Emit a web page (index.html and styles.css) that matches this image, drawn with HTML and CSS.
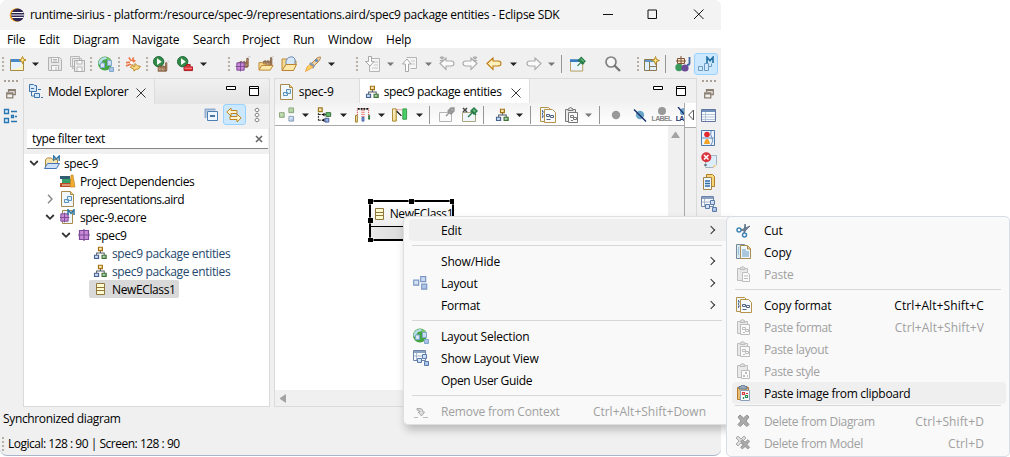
FILE: index.html
```html
<!DOCTYPE html>
<html lang="en">
<head>
<meta charset="utf-8">
<title>runtime-sirius - Eclipse SDK</title>
<link rel="stylesheet" href="styles.css">
</head>
<body>
<svg class="sprite" width="0" height="0">
<defs>
<linearGradient id="gY" x1="0" y1="0" x2="1" y2="1"><stop offset="0" stop-color="#fffce8"/><stop offset="1" stop-color="#f0cf72"/></linearGradient>
<linearGradient id="gG" x1="0" y1="0" x2="1" y2="1"><stop offset="0" stop-color="#e0f2dc"/><stop offset="1" stop-color="#57a05c"/></linearGradient>
<linearGradient id="gB" x1="0" y1="0" x2="1" y2="1"><stop offset="0" stop-color="#f2f7ff"/><stop offset="1" stop-color="#9fb8e4"/></linearGradient>
<linearGradient id="gS" x1="0" y1="0" x2="1" y2="1"><stop offset="0" stop-color="#e3efcb"/><stop offset="1" stop-color="#8fbf8d"/></linearGradient>
</defs>
<symbol id="dots-v" viewBox="0 0 3 16"><path d="M0 1h2v2H0zM0 5h2v2H0zM0 9h2v2H0zM0 13h2v2H0z" fill="#b8afa6"/></symbol>
<symbol id="dots-h" viewBox="0 0 16 3"><path d="M1 0h2v2H1zM5 0h2v2H5zM9 0h2v2H9zM13 0h2v2h-2z" fill="#aaa096"/></symbol>
<symbol id="arrow" viewBox="0 0 9 16"><path d="M1 6.500h7L4.500 10z"/></symbol>
<symbol id="eclipse" viewBox="0 0 16 16"><circle cx="7.500" cy="8" r="6.800" fill="#f6a51d"/><circle cx="8.700" cy="8" r="6.500" fill="#2e2753"/><path d="M3 5.500h11.500M2.300 8h13M3 10.500h11.500" stroke="#fff" stroke-width="1.200"/></symbol>
<symbol id="new" viewBox="0 0 16 16"><path d="M.5 3.500h13v11H.5z" fill="#e6f1fc" stroke="#a78a42"/><path d="M1 3h10v3H1z" fill="#4b89c6"/><path d="M3 13q8 0 10-7v8H3z" fill="#fff5c9"/><path d="M12.500.5l1 2.500 2.500 1-2.500 1-1 2.500-1-2.500L9 4l2.500-1z" fill="#ffe680" stroke="#b58a26"/></symbol>
<symbol id="save" viewBox="0 0 16 16"><path d="M1.500 1.500h11l2 2v11h-13z" fill="#e8e8e8" stroke="#b2b2b2"/><path d="M4.500 1.500h7v5h-7zM4.500 9.500h7v5h-7z" fill="#f6f6f6" stroke="#b2b2b2"/><path d="M6 3.500h4M6 5h4M9 11v3" stroke="#b5b5b5"/></symbol>
<symbol id="saveall" viewBox="0 0 16 16"><path d="M.5.5h9v10h-9zM2.500 2.500h9v10h-9z" fill="#ececec" stroke="#b8b8b8"/><path d="M4.500 4.500h10v11h-10z" fill="#ececec" stroke="#adadad"/><path d="M7 5v3h5V5M7 15v-4h5v4" fill="#fafafa" stroke="#b8b8b8"/></symbol>
<symbol id="globe" viewBox="0 0 16 16"><circle cx="7" cy="7.500" r="7" fill="#45a544"/><path d="M1 5q2-4 7-4l1 2-4 1-2 3-2 2Q0 7 1 5z" fill="#b9dcef"/><path d="M9 1q5 2 5 6l-4 2z" fill="#7ec671"/><path d="M2.500 7h4v4.500h-4zM9.500 4.500h4v5h-4zM11.500 11.500h4v4h-4z" fill="url(#gB)" stroke="#7fa8cc"/></symbol>
<symbol id="validate" viewBox="0 0 17 16"><path d="M1 6.500l6-.5M4 1l3.500 4.500M9 1l-1 4M1 10l6-2M11 4l-4 3" stroke="#ee7749" stroke-width="1.800" fill="none"/><circle cx="7" cy="6.500" r="1.700" fill="#fff"/><path d="M5.500 11.500l3-3v2h2v-3l3 2.500 3 .5-2.500 3h-2l-2.500 2v-2z" fill="#f9dc86" stroke="#bd8420"/></symbol>
<symbol id="factory" viewBox="0 0 16 16"><path d="M0 15V9l4-2v2l4-2v2l4-2v8z" fill="#a37c59" stroke="#765334"/><path d="M11 14V3h2v11z" fill="#b88c6b" stroke="#765334"/><path d="M2 12h2M6 12h2M10 12h1" stroke="#eee"/><path d="M13 1q2-2 3 1" fill="none" stroke="#b8b8b8"/></symbol>
<symbol id="play" viewBox="0 0 16 16"><circle cx="6" cy="6" r="5.500" fill="#318a47" stroke="#176634"/><path d="M4.300 2.500v7l5-3.500z" fill="#fff"/></symbol>
<symbol id="runfac" viewBox="0 0 17 17"><use href="#play" width="16" height="16"/><use href="#factory" x="5" y="5" width="12" height="12"/></symbol>
<symbol id="runext" viewBox="0 0 17 17"><use href="#play" width="16" height="16"/><path d="M7.500 11.500h9v4h-9zM10 11V9h4v2" fill="#e92b2b" stroke="#a41c23"/><path d="M8 13h8" stroke="#ff999d"/></symbol>
<symbol id="pkg" viewBox="0 0 16 16"><path d="M3.500 3.500h9v9h-9z" fill="#c98bd6"/><path d="M3.500 3.500h9v9h-9zM8 2v12M2 8h12" fill="none" stroke="#7f4a99" stroke-width="1.200"/></symbol>
<symbol id="facpkg" viewBox="0 0 16 16"><use href="#factory" x="3" y="0" width="13" height="12"/><use href="#pkg" x="-1" y="4" width="13" height="13"/></symbol>
<symbol id="folder" viewBox="0 0 16 16"><path d="M1.500 14V4.500l1-1.500h4l1 1.500h6V8" fill="#f7d98c" stroke="#bc8936"/><path d="M1.500 14.500l3-6.500h11l-2.500 6.500z" fill="#fce8a9" stroke="#ba8130"/></symbol>
<symbol id="facfolder" viewBox="0 0 17 16"><use href="#factory" x="5" y="-1" width="12" height="12"/><path d="M1 14V6.500h4l1 1.500h3" fill="#f7d98c" stroke="#bc8936"/><path d="M1 14.500l3-5h12l-3 5z" fill="#fce8a9" stroke="#ba8130"/></symbol>
<symbol id="openfolder" viewBox="0 0 16 16"><path d="M1 14V3h6l1 2h7v3" fill="#f7d98c" stroke="#bc8936"/><path d="M5 9V5q2-5 7-4l2 2v7" fill="#d7e7fa" stroke="#6f8bb3"/><path d="M1 14.500l4-6h10.500l-3 6z" fill="#fce8a9" stroke="#ba8130"/></symbol>
<symbol id="rocket" viewBox="0 0 16 16"><path d="M5 9l7-7q3-1.500 3.500-1 .5 1-1.500 4l-6 6z" fill="#ecd0a1" stroke="#b58750"/><path d="M4 8l2-2 4 4-2 3z" fill="#8898a8"/><path d="M4.500 9L2 11l-1.500 4.500L5 13l3-2z" fill="#ffcf57" stroke="#f1a94e"/><circle cx="11.500" cy="4.500" r="1.500" fill="#5987bf"/></symbol>
<symbol id="docdown" viewBox="0 0 16 16"><path d="M6.500 2.500h8v13h-10V10" fill="#f5f5f5" stroke="#b5b5b5"/><path d="M9 6h4M9 9h4M7 12h6" stroke="#c8c8c8"/><path d="M3.500.5h3v5h2.500L5 10 .5 5.500h3z" fill="#fff" stroke="#a7a7a7"/></symbol>
<symbol id="docup" viewBox="0 0 16 16"><path d="M4.500 1.500h10v11h-6" fill="#f5f5f5" stroke="#b5b5b5"/><path d="M9 5h4M9 8h4" stroke="#c8c8c8"/><path d="M3.500 15.500h3V8H9L5 3 .5 8h3z" fill="#fff" stroke="#a7a7a7"/></symbol>
<symbol id="back" viewBox="0 0 16 16"><path d="M1 7.500L7 2v3h5q3 0 3 2.500T12 10H7v3.500z"/></symbol>
<symbol id="forward" viewBox="0 0 16 16"><path d="M15 7.500L9 2v3H4q-3 0-3 2.500T4 10h5v3.500z"/></symbol>
<symbol id="pinwin" viewBox="0 0 17 16"><path d="M.5 4.500h13v11H.5z" fill="#edf5fe" stroke="#b29859"/><path d="M0 3h14v3H0z" fill="#397dbf"/><path d="M8 10l3-3M10 3l5 5M12 1l4 4-3 3-4-4z" fill="#65b877" stroke="#267b48" stroke-width="1.300"/></symbol>
<symbol id="search" viewBox="0 0 16 16"><circle cx="6" cy="6" r="5" fill="#f7f7f7" stroke="#808080" stroke-width="1.700"/><path d="M9.500 9.500L15 15" stroke="#747474" stroke-width="2.200"/></symbol>
<symbol id="persp" viewBox="0 0 16 16"><path d="M.5 3.500h12v11H.5z" fill="#e1f0fd" stroke="#8c764c"/><path d="M1 4h11v2H1z" fill="#6295c7"/><path d="M5.500 6v8M5.500 10.500h7" stroke="#8c764c"/><path d="M11.500.5l1 3 3 1-3 1-1 3-1-3-3-1 3-1z" fill="#ffe680" stroke="#b58a26"/></symbol>
<symbol id="java" viewBox="0 0 16 16"><path d="M2.500 2.500h7v5h-7zM6 0v9M1 5h10" fill="#f7e7cb" stroke="#805336"/><circle cx="4" cy="11.500" r="3.700" fill="#3c9a5c"/><circle cx="10" cy="12" r="3.600" fill="#6c4b98"/><path d="M14.500 1v6q0 2-2.500 2" stroke="#4068a6" stroke-width="1.800" fill="none"/></symbol>
<symbol id="modeling" viewBox="0 0 16 16"><path d="M.5 10.500h4v4h-4zM6.500 7.500h4v7h-4zM10.500 10.500h3v-3" fill="#d1e7fb" stroke="#6c9cc4"/><path d="M9 7V1.200l3 3.500 3-3.500V7" fill="none" stroke="#2875a9" stroke-width="1.700"/></symbol>
<symbol id="explorer" viewBox="0 0 16 16"><path d="M1.500.5h4l1 1h2v6h-7zM6.500 9.500h5v4h-5z" fill="#d8e9fb" stroke="#3c75ad"/><path d="M3 4.500h3M3.500 8v4H6M10 5.500h3M13 13.500h2" stroke="#3c75ad" fill="none"/></symbol>
<symbol id="outline" viewBox="0 0 16 16"><path d="M1.500 1.500h4v4h-4zM1.500 10.500h4v4h-4zM8.500 7.500h2v2h-2z" fill="#d7ecfa" stroke="#2776b2" stroke-width="1.300"/><path d="M8 3.500h6M12 8.500h2M8 13.500h6" stroke="#2776b2" stroke-width="1.300"/></symbol>
<symbol id="restore" viewBox="0 0 10 10"><path d="M2.500 3V.7h6.800v4.800H7M.7 4h6.100v4.800H.7zM.7 4.800h6M2.500 1.500h6.500" fill="none" stroke="#8c8073" stroke-width="1.300"/></symbol>
<symbol id="collapse" viewBox="0 0 16 16"><path d="M1.500 11V2.500h10" fill="none" stroke="#92afd1" stroke-width="2"/><path d="M3.500 4.500h10v9h-10z" fill="#eef7ff" stroke="#4d80b5"/><path d="M6 9h5" stroke="#174c80" stroke-width="1.400"/></symbol>
<symbol id="link" viewBox="0 0 16 16"><path d="M.8 5L5 1v2.500h6v3H5V9zM15.200 11L11 7v2.500H4v3h7V15z" fill="#fff4cf" stroke="#bd8320"/></symbol>
<symbol id="kebab" viewBox="0 0 6 16"><path d="M1 2.500L3 1l2 1.500v1L3 5 1 3.500zM1 7.500L3 6l2 1.500v1L3 10 1 8.500zM1 12.500L3 11l2 1.500v1L3 15l-2-1.500z" fill="#fff" stroke="#707070" stroke-width=".9"/></symbol>
<symbol id="minimize" viewBox="0 0 10 5"><path d="M.5.5h9v3h-9z" fill="#fff" stroke="#000"/></symbol>
<symbol id="maximize" viewBox="0 0 10 10"><path d="M.5.5h9v9h-9zM.5 2.500h9" fill="#fff" stroke="#000"/></symbol>
<symbol id="x" viewBox="0 0 10 10"><path d="M.5.5l9 9M9.500.5l-9 9" stroke="#222" stroke-width=".9"/></symbol>
<symbol id="clear" viewBox="0 0 8 8"><path d="M1 1l6 6M7 1L1 7" stroke="#666" stroke-width="1.600"/></symbol>
<symbol id="open" viewBox="0 0 10 10"><path d="M1.200 3L5 6.800 8.800 3" fill="none" stroke="#333" stroke-width="1.800"/></symbol>
<symbol id="closed" viewBox="0 0 10 10"><path d="M3 .8L7 5 3 9.200" fill="none" stroke="#888" stroke-width="1.400"/></symbol>
<symbol id="project" viewBox="0 0 16 16"><path d="M1.500 13V4.500l2-1.500h4l1 1.500h5V9" fill="#f8e5ae" stroke="#ae8747"/><path d="M.5 13.500l3-5h12l-3 5z" fill="#cce0fa" stroke="#4675b7"/><path d="M9.700 6V1l2.600 3L15.200 1v5" fill="none" stroke="#3479a7" stroke-width="1.500"/></symbol>
<symbol id="books" viewBox="0 0 16 16"><path d="M0 3h10v3H0z" fill="#305d70"/><path d="M2 6h9v4H2z" fill="#35a06b"/><path d="M0 10h11v4H0z" fill="#b74b25"/><path d="M2 12h10" stroke="#ffe5c3"/><path d="M10 14l1-12h2l2 12z" fill="#f2ad30" stroke="#b87b21" stroke-width=".6"/></symbol>
<symbol id="aird" viewBox="0 0 16 16"><path d="M1.500.5h9l3 3v12h-12z" fill="#f0f7fd" stroke="#a98a4d"/><path d="M10.500.5v3h3" fill="#f1ca71" stroke="#a98a4d"/><path d="M4.500 8.500h4v3h-4zM7.500 5.500h4v4h-4z" fill="#dff0fd" stroke="#5b91bd"/></symbol>
<symbol id="ecore" viewBox="0 0 16 16"><path d="M2.500 1.500h10v13h-10z" fill="#eef5fb" stroke="#a98a4d"/><use href="#pkg" x="-2" y="2" width="13" height="13"/><path d="M8 6V.8l3 3.500 3-3.500V6" fill="none" stroke="#3479a7" stroke-width="1.600"/></symbol>
<symbol id="diagram" viewBox="-2 -1.500 19 19"><path d="M8 5v3M3.500 11V8h9v3" fill="none" stroke="#4f5a62" stroke-width="1.200"/><path d="M5.700 1.200h4.600v4H5.700z" fill="url(#gY)" stroke="#a46f12" stroke-width="1.400"/><path d="M1 10.700h4.800v3.800H1z" fill="url(#gB)" stroke="#48638f" stroke-width="1.400"/><path d="M10 10.700h4.800v3.800H10z" fill="url(#gG)" stroke="#417037" stroke-width="1.400"/></symbol>
<symbol id="class" viewBox="0 0 16 16"><path d="M4.500 2.500h8v11h-8zM4.500 6.500h8M4.500 9.500h8" fill="#fffbd0" stroke="#8f763d"/></symbol>
<symbol id="arrange" viewBox="0 0 17 16"><path d="M.5 5.500h5v5h-5zM10.500.5h5v5h-5z" fill="url(#gS)" stroke="#88a379"/><path d="M10.500 9.500h5v5h-5z" fill="url(#gB)" stroke="#879fb8"/></symbol>
<symbol id="align" viewBox="0 0 17 16"><path d="M1.500.5h4v4h-4z" fill="url(#gY)" stroke="#9b7a22" stroke-width="1.300"/><path d="M1.500 6v9M2 7.500h8M2 13.500h6" fill="none" stroke="#111" stroke-dasharray="2 1"/><path d="M5 7.500l3-2v4zM5 13.500l3-2v4z" fill="#111"/><path d="M9.500 5.500h5v4h-5z" fill="#65b96d" stroke="#356d39"/><path d="M8.500 11.500h4v4h-4z" fill="#95b4e5" stroke="#3d5591"/></symbol>
<symbol id="distribute" viewBox="0 0 17 16"><path d="M.5 8.500h2v7h-2z" fill="url(#gY)" stroke="#9b7a22"/><path d="M7.500 10.500h2v4h-2z" fill="#7fa0db" stroke="#4061a5"/><path d="M14.500 8.500h1v4h-1z" fill="#65b96d" stroke="#356d39"/><path d="M2.500 1v7M7.500 1v9M9.500 1v9M14.500 1v7" stroke="#d22" stroke-dasharray="1 1"/><path d="M3 1.500h12" stroke="#111" stroke-dasharray="2 1" stroke-width="2"/></symbol>
<symbol id="samesize" viewBox="0 0 17 16"><path d="M.5 1.500h4v13h-4z" fill="url(#gY)" stroke="#a48329"/><path d="M11.500 1.500h4v11h-4z" fill="#49cf66" stroke="#389a4d"/><path d="M5 2.500h6" stroke="#d33" stroke-dasharray="1 1"/><path d="M5 4l5 5" stroke="#111" stroke-width="1.300"/></symbol>
<symbol id="pingray" viewBox="0 0 16 16"><path d="M.5 5.500h12v9H.5z" fill="#fafafa" stroke="#b4b4b4"/><path d="M7 9l4-4M10 2l4 4M12 1h3v3l-3 3-3-3z" fill="#aaa" stroke="#919191" stroke-width="1.300"/></symbol>
<symbol id="unpin" viewBox="0 0 16 16"><path d="M.5 5.500h13v9H.5z" fill="#f0f6fc" stroke="#aaa580"/><path d="M1 1l4 4M5 1L1 5" stroke="#444" stroke-width="1.500"/><path d="M6 10l4-4M9 3l5 5M12 1l3 3-3 3-3-3z" fill="#68b779" stroke="#267b48" stroke-width="1.400"/></symbol>
<symbol id="copyfmt" viewBox="0 0 16 16"><path d="M.5.5h8l2 2v12h-10z" fill="#eff6fc" stroke="#b6924a"/><path d="M4.500 2.500h8l3 3v10h-11z" fill="#f8fcff" stroke="#b6924a"/><path d="M2.500 3v9M2 5h2M2 9h2" stroke="#536d94" stroke-dasharray="2 1"/><path d="M6.500 7.500h3v2h-3zM10.500 8.500h3v2h-3zM6.500 12.500h4" fill="none" stroke="#526587"/></symbol>
<symbol id="copy" viewBox="0 0 16 16"><path d="M.5.500h8l2 2v12h-10z" fill="#d7e9f4" stroke="#788b91"/><path d="M4.500 1.500h7l3 3v10h-10z" fill="#f0f8ff" stroke="#a88d53"/><path d="M11.500 2v3h3" fill="#f0ca72" stroke="#a88d53"/><path d="M6 6h4M6 8h7M6 10h7M6 12h7M2 4h1M2 6h1M2 8h1M2 10h1" stroke="#6697ba"/></symbol>
<symbol id="clip" viewBox="0 0 16 16"><path d="M1.500 2.500h10v12h-10z" fill="#e9e9e9" stroke="currentColor"/><path d="M4 3.500V2q2.500-3 5 0v1.500z" fill="#ddd" stroke="currentColor"/></symbol>
<symbol id="pastefmt" viewBox="0 0 16 16"><use href="#clip" width="16" height="16"/><path d="M4.500 5.500h9v10h-9z" fill="#fafafa" stroke="currentColor"/><path d="M6.500 8.500h3v2h-3zM9.500 10.500h3v2h-3zM7 13.500h2" fill="none" stroke="currentColor"/></symbol>
<symbol id="paste" viewBox="0 0 16 16"><use href="#clip" width="16" height="16"/><path d="M6.500 6.500h5l2 2v7h-7z" fill="#fafafa" stroke="currentColor"/><path d="M8 10h4M8 12.500h4" stroke="currentColor"/></symbol>
<symbol id="pastestyle" viewBox="0 0 16 16"><use href="#clip" width="16" height="16"/><path d="M5.500 7.500h8v8h-8z" fill="#fafafa" stroke="currentColor"/><path d="M7 12h2v2H7zM9 9h2v2H9zM11 12h1v2h-1z" fill="currentColor"/></symbol>
<symbol id="pasteimg" viewBox="0 0 16 16"><path d="M1.500 2.500h11v12h-11z" fill="#e9bc71" stroke="#b87c2e"/><path d="M3 4V1.500h2L6 0h2l1 1.500h2V4z" fill="#9aaabd" stroke="#63778f"/><path d="M4.500 5.500h9v10h-9z" fill="#f8fcff" stroke="#8aa0b8"/><path d="M6.500 7.500h2v2h-2z" fill="#fff" stroke="#d63d36" stroke-width="1.200"/><path d="M10 8.500h2" stroke="#c33" stroke-width="1.200"/><path d="M9.500 10.500h2v2h-2zM7.500 12v2" fill="#fff" stroke="#298f4f" stroke-width="1.200"/></symbol>
<symbol id="dot" viewBox="0 0 16 16"><circle cx="8" cy="8" r="4.200" fill="#999"/></symbol>
<symbol id="hide" viewBox="0 0 16 16"><circle cx="8" cy="8" r="4.200" fill="#6ba5c9"/><path d="M2 2.500l12 12" stroke="#17306b" stroke-width="1.400"/></symbol>
<symbol id="table" viewBox="0 0 16 16"><path d="M.5 1.500h14v12H.5z" fill="#f8fcff" stroke="#6076a0"/><path d="M1 2h13v2H1z" fill="#6f91bd"/><path d="M4.500 4v9M1 6.500h13M1 9h13M1 11.500h13" stroke="#b4c5da"/></symbol>
<symbol id="imgview" viewBox="0 0 16 16"><path d="M.5.500h13v15H.5z" fill="#eaf5ff" stroke="#4f7aab"/><path d="M1 8h13M10 1q-1 4 1 7t-1 7" stroke="#6c90b9" fill="none"/><circle cx="6" cy="4.500" r="2.800" fill="#e5282e"/><path d="M3 14q1-5 3-5t3 5z" fill="#f4a127"/></symbol>
<symbol id="problems" viewBox="0 0 16 16"><path d="M4.500 3.500h11v9l-3 3h-8z" fill="#dceefb" stroke="#a4b3bd"/><path d="M12 16v-3h4z" fill="#f6d695"/><circle cx="5.300" cy="5.300" r="5" fill="#d9333c"/><path d="M3 3l4.500 4.500M7.500 3L3 7.500" stroke="#fff" stroke-width="1.600"/><path d="M3 13h3" stroke="#345"/></symbol>
<symbol id="tasks" viewBox="0 0 16 16"><path d="M5.500.5h6l2 2v10h-8z" fill="#f7d579" stroke="#af802b"/><path d="M2.500 3.500h8v12h-8z" fill="#eef6ff" stroke="#a28348"/><path d="M4 7h5M4 9.500h5M4 12h5" stroke="#326eaa" stroke-width="1.300"/></symbol>
<symbol id="layoutview" viewBox="0 0 16 16"><path d="M.5.5h12v10H.5z" fill="#f6fafe" stroke="#6c83a7"/><path d="M1 1h11v2H1z" fill="#8aa2c0"/><path d="M3.500 3v7M1 6h11" stroke="#a8b7c9"/><path d="M4.500 8.500h4v4h-4zM9.500 4.500h4v4h-4zM11.500 11.500h4v4h-4z" fill="url(#gB)" stroke="#577aa7"/></symbol>
<symbol id="layout" viewBox="0 0 16 16"><path d="M.7 5.200h5v5h-5zM7.700 1.700h5v5h-5zM8.700 9.200h5v5h-5z" fill="url(#gB)" stroke="#7b97c4" stroke-width="1.200"/></symbol>
<symbol id="cut" viewBox="0 0 16 16"><circle cx="3" cy="8" r="2" fill="none" stroke="#3e86b7" stroke-width="1.500"/><circle cx="8.500" cy="13" r="2" fill="none" stroke="#3e86b7" stroke-width="1.500"/><path d="M5 8l9-4-5 5zM8 11l1-9 1 6z" fill="#8796a8" stroke="#61758b"/></symbol>
<symbol id="remove" viewBox="0 0 16 16"><path d="M1 14.500h4M10 14.500h5" stroke="#bbb" stroke-width="1.200"/><path d="M4 5.500h3q3 0 3 3.500h1.500l-3 4-3.500-4h2q0-2-3-2z" fill="#ddd" stroke="#aaa"/></symbol>
<symbol id="delete" viewBox="0 0 16 16"><path d="M2 4l2-2 3.500 3L11 2l2 2-3 4 3 3.500-2 2-3.500-3-3.500 3-2-2L5 8z" fill="#aaa" stroke="#939393"/></symbol>
<symbol id="deletemodel" viewBox="0 0 16 16"><path d="M0 3l2-2 3 3 3-3 2 2-3 3 3 3-2 2-3-3-3 3-2-2 3-3z" fill="#ddd" stroke="#aaa"/><use href="#delete" x="3" y="3" width="13" height="13"/></symbol>
</svg>

<div class="window">
  <header class="titlebar">
    <svg class="app"><use href="#eclipse"/></svg>
    <span class="caption">runtime-sirius - platform:/resource/spec-9/representations.aird/spec9 package entities - Eclipse SDK</span>
    <svg class="winbtns" viewBox="0 0 101 12"><path d="M0 6.500h10M45 2h8.500v8.500H45zM100.500 1.500l-9.500 9.500M91 1.500l9.500 9.500" fill="none" stroke="#111"/></svg>
  </header>
  <nav class="menubar"><span>File</span><span>Edit</span><span>Diagram</span><span>Navigate</span><span>Search</span><span>Project</span><span>Run</span><span>Window</span><span>Help</span></nav>
  <div class="toolbar main">
    <svg><use href="#dots-v"/></svg><svg><use href="#new"/></svg><svg class="drop"><use href="#arrow"/></svg><svg><use href="#save"/></svg><svg><use href="#saveall"/></svg>
    <svg><use href="#dots-v"/></svg><svg><use href="#globe"/></svg><svg><use href="#dots-v"/></svg><svg><use href="#validate"/></svg><svg><use href="#dots-v"/></svg>
    <svg><use href="#runfac"/></svg><svg><use href="#runext"/></svg><svg class="drop"><use href="#arrow"/></svg><svg><use href="#dots-v"/></svg><svg><use href="#facpkg"/></svg>
    <svg><use href="#facfolder"/></svg><svg><use href="#openfolder"/></svg><svg><use href="#rocket"/></svg><svg class="drop"><use href="#arrow"/></svg><svg><use href="#dots-v"/></svg>
    <svg><use href="#docdown"/></svg><svg class="drop dim"><use href="#arrow"/></svg><svg><use href="#docup"/></svg><svg class="drop dim"><use href="#arrow"/></svg>
    <svg class="nav off" viewBox="0 0 16 16"><use href="#back"/><path d="M1 1l4 4M5 1L1 5M3 0v6"/></svg><svg class="nav off" viewBox="0 0 16 16"><use href="#forward"/><path d="M11 1l4 4M15 1l-4 4M13 0v6"/></svg>
    <svg class="nav"><use href="#back"/></svg><svg class="drop"><use href="#arrow"/></svg><svg class="nav off"><use href="#forward"/></svg><svg class="drop dim"><use href="#arrow"/></svg>
    <i class="sep"></i><svg><use href="#pinwin"/></svg><svg><use href="#search"/></svg><svg><use href="#dots-v"/></svg><svg><use href="#persp"/></svg><i class="sep"></i><svg><use href="#java"/></svg>
    <b class="active"><svg><use href="#modeling"/></svg></b>
  </div>

  <main class="workbench">
    <aside class="trim left"><svg class="grip"><use href="#dots-h"/></svg><svg class="restore"><use href="#restore"/></svg><svg><use href="#outline"/></svg></aside>
    <section class="explorer">
      <div class="tabs"><div class="tab"><svg><use href="#explorer"/></svg><span>Model Explorer</span><svg class="close"><use href="#x"/></svg></div><div class="viewbtns"><svg class="min"><use href="#minimize"/></svg><svg class="max"><use href="#maximize"/></svg></div></div>
      <div class="viewbar"><svg><use href="#collapse"/></svg><b class="active"><svg><use href="#link"/></svg></b><svg class="kebab"><use href="#kebab"/></svg></div>
      <div class="filter"><span>type filter text</span><svg><use href="#clear"/></svg></div>
      <div class="tree">
        <div class="row l0"><svg class="twist"><use href="#open"/></svg><svg><use href="#project"/></svg><span>spec-9</span></div>
        <div class="row l1"><i class="twist"></i><svg><use href="#books"/></svg><span>Project Dependencies</span></div>
        <div class="row l1 file"><svg class="twist"><use href="#closed"/></svg><svg><use href="#aird"/></svg><span>representations.aird</span></div>
        <div class="row l1"><svg class="twist"><use href="#open"/></svg><svg><use href="#ecore"/></svg><span>spec-9.ecore</span></div>
        <div class="row l2"><svg class="twist"><use href="#open"/></svg><svg><use href="#pkg"/></svg><span>spec9</span></div>
        <div class="row l3 rep"><svg><use href="#diagram"/></svg><span>spec9 package entities</span></div>
        <div class="row l3 rep"><svg><use href="#diagram"/></svg><span>spec9 package entities</span></div>
        <div class="row l3 selected"><svg><use href="#class"/></svg><span>NewEClass1</span></div>
      </div>
    </section>
    <section class="editor">
      <div class="tabs"><div class="tab plain"><svg><use href="#aird"/></svg><span>spec-9</span></div><div class="tab current"><svg><use href="#diagram"/></svg><span>spec9 package entities</span><svg class="close"><use href="#x"/></svg></div><div class="viewbtns"><svg class="min"><use href="#minimize"/></svg><svg class="max"><use href="#maximize"/></svg></div></div>
      <div class="editorbody">
        <div class="diagram">
          <div class="toolbar edit">
            <svg><use href="#arrange"/></svg><svg class="drop"><use href="#arrow"/></svg><svg><use href="#align"/></svg><svg class="drop"><use href="#arrow"/></svg><svg><use href="#distribute"/></svg><svg class="drop"><use href="#arrow"/></svg><svg><use href="#samesize"/></svg><svg class="drop"><use href="#arrow"/></svg><i class="sep"></i>
            <svg><use href="#pingray"/></svg><svg><use href="#unpin"/></svg><i class="sep"></i><svg><use href="#diagram"/></svg><svg class="drop"><use href="#arrow"/></svg><i class="sep"></i><svg><use href="#copyfmt"/></svg><svg class="mid"><use href="#pastefmt"/></svg><svg class="drop dim"><use href="#arrow"/></svg><i class="sep"></i>
            <svg><use href="#dot"/></svg><svg><use href="#hide"/></svg><span class="lbl"><i></i>LABEL</span><span class="lbl blue"><svg viewBox="0 0 8 8"><circle cx="8" cy="5" r="4" fill="#6ba5c9"/><path d="M2 0l6 7" stroke="#17306b" stroke-width="1.300"/></svg>LA</span>
          </div>
          <div class="canvas">
            <div class="page">
              <div class="node"><div class="nodehead"><svg><use href="#class"/></svg><span>NewEClass1</span></div><div class="nodebody"></div>
                <svg class="handles" viewBox="0 0 86 43"><path d="M0 0h5v5H0zM41 0h5v5h-5zM82 0h4v5h-4zM0 19h5v5H0zM0 39h5v4H0z" fill="#000" stroke="#fff" stroke-width=".8" paint-order="stroke"/></svg>
              </div>
            </div>
            <div class="vscroll"><svg viewBox="0 0 9 7"><path d="M0 6L4 0h1l4 6z" fill="#a3a3a3"/></svg></div>
          </div>
          <div class="hscroll"><svg viewBox="0 0 7 9"><path d="M6 0L0 4v1l6 4z" fill="#a3a3a3"/></svg></div>
        </div>
        <div class="palette"><div class="palbtn"><svg viewBox="0 0 6 12"><path d="M5.500 1v10L.7 6z" fill="#fff" stroke="#555"/></svg></div></div>
      </div>
    </section>
    <aside class="trim right"><svg class="grip"><use href="#dots-h"/></svg><svg class="restore"><use href="#restore"/></svg><svg><use href="#table"/></svg><svg><use href="#imgview"/></svg><svg><use href="#problems"/></svg><svg><use href="#tasks"/></svg><svg><use href="#layoutview"/></svg></aside>
  </main>
  <div class="message">Synchronized diagram</div>
  <footer class="status"><svg><use href="#dots-v"/></svg><span>Logical: 128 : 90 | Screen: 128 : 90</span></footer>
</div>

<div class="menu context">
  <div class="item hover"><i></i><span>Edit</span><em class="sub"></em></div>
  <hr>
  <div class="item"><i></i><span>Show/Hide</span><em class="sub"></em></div>
  <div class="item"><svg><use href="#layout"/></svg><span>Layout</span><em class="sub"></em></div>
  <div class="item"><i></i><span>Format</span><em class="sub"></em></div>
  <hr>
  <div class="item"><svg><use href="#globe"/></svg><span>Layout Selection</span></div>
  <div class="item"><svg><use href="#layoutview"/></svg><span>Show Layout View</span></div>
  <div class="item"><i></i><span class="snug">Open User Guide</span></div>
  <hr>
  <div class="item disabled"><svg><use href="#remove"/></svg><span>Remove from Context</span><kbd>Ctrl+Alt+Shift+Down</kbd></div>
</div>

<div class="menu submenu">
  <div class="item"><svg><use href="#cut"/></svg><span>Cut</span></div>
  <div class="item"><svg><use href="#copy"/></svg><span>Copy</span></div>
  <div class="item disabled"><svg><use href="#paste"/></svg><span>Paste</span></div>
  <hr>
  <div class="item"><svg><use href="#copyfmt"/></svg><span>Copy format</span><kbd>Ctrl+Alt+Shift+C</kbd></div>
  <div class="item disabled"><svg><use href="#pastefmt"/></svg><span class="snug">Paste format</span><kbd>Ctrl+Alt+Shift+V</kbd></div>
  <div class="item disabled"><svg><use href="#pastefmt"/></svg><span class="snug">Paste layout</span></div>
  <div class="item disabled"><svg><use href="#pastestyle"/></svg><span class="snug">Paste style</span></div>
  <div class="item hover"><svg><use href="#pasteimg"/></svg><span class="dense">Paste image from clipboard</span></div>
  <hr class="tight">
  <div class="item disabled"><svg><use href="#delete"/></svg><span class="snug">Delete from Diagram</span><kbd>Ctrl+Shift+D</kbd></div>
  <div class="item disabled"><svg><use href="#deletemodel"/></svg><span class="snug">Delete from Model</span><kbd>Ctrl+D</kbd></div>
</div>
</body>
</html>
```
FILE: styles.css
```css
* { box-sizing: border-box; }
body { margin: 0; width: 1010px; height: 457px; overflow: hidden; background: #fff; color: #000; font: 12px/18px "Open Sans", "Noto Sans", sans-serif; letter-spacing: -0.2px; position: relative; }
svg { display: block; width: 16px; height: 16px; flex: none; }
.sprite { position: absolute; width: 0; height: 0; }
span, kbd { white-space: nowrap; }

.window { width: 721px; height: 456px; background: #f0f0f0; border-radius: 7px; border-bottom: 1px solid #a9b5c9; overflow: hidden; }
.titlebar { height: 30px; display: flex; align-items: center; background: #f3f3f3; padding: 0 17px 0 9px; }
.titlebar .app { margin-right: 5px; }
.caption { letter-spacing: -0.28px; }
.titlebar .winbtns { width: 101px; height: 12px; margin-left: auto; margin-bottom: 2px; }
.menubar { height: 18px; background: #fff; padding-left: 7px; display: grid; grid-template-columns: 32px 34px 59px 61px 49px 51px 35px 58px 40px; line-height: 20px; }

.toolbar { display: grid; align-items: center; }
.toolbar > svg, .toolbar > i { justify-self: start; }
.main { height: 30px; padding: 2px 0 0 2px; grid-template-columns: 8px 21px 16px 23px 20px 8px 20px 7px 21px 7px 24px 22px 29px 7px 23px 23px 24px 22px 29px 9px 21px 16px 22px 15px 23px 24px 23px 17px 21px 14px 9px 35px 32px 7px 21px 10px 19px 24px; }
.main > svg:has(use[href="#dots-v"]), .status svg { width: 3px; }
.drop { width: 9px; fill: #222; }
.drop.dim { fill: #777; }
.nav { fill: #fff1bd; stroke: #bd7b12; stroke-width: 1.1; }
.nav.off { fill: #fafafa; stroke: #aaa; }
.sep { width: 1px; height: 18px; background: #969696; }
.active { display: flex; align-items: center; justify-content: center; width: 24px; height: 22px; background: #cce8ff; border: 1px solid #99d1ff; border-radius: 3px; }

.workbench { height: 329px; display: flex; }
.trim { width: 23px; display: flex; flex-direction: column; align-items: center; }
.trim .grip { height: 3px; margin: 2px 0 6px; }
.trim .restore { width: 10px; height: 10px; margin-bottom: 9px; }
.trim.right > svg:nth-child(n+3) { margin-bottom: 6px; }
.trim.right { width: 24px; }
.explorer { width: 247px; border: 1px solid #dadada; display: flex; flex-direction: column; }
.tabs { height: 25px; display: flex; flex: none; background: linear-gradient(#f0f0f0, #e4e4e4); }
.tab { display: flex; align-items: center; border-right: 1px solid #ddd; background: #f0f0f0; padding: 1px 0 0 4px; letter-spacing: -0.36px; line-height: 20px; }
.tab span { margin-left: 4px; }
.tab .close { width: 10px; height: 10px; margin-left: auto; margin-right: 8px; margin-top: 2px; }
.explorer .tab { width: 131px; }
.viewbtns { margin-left: auto; display: flex; gap: 13px; padding: 7px 10px 0 0; }
.viewbtns .min { width: 10px; height: 5px; }
.viewbtns .max { width: 10px; height: 10px; }
.viewbar { height: 25px; flex: none; display: flex; justify-content: flex-end; align-items: center; padding: 0 9px 4px 0; }
.viewbar .active { width: 23px; height: 21px; margin: 0 8px 0 3px; }
.viewbar .kebab { width: 6px; }
.filter { height: 20px; margin: 0 1px 5px 3px; flex: none; background: #fff; border-bottom: 1px solid #858585; display: flex; align-items: center; justify-content: space-between; padding: 0 5px; letter-spacing: -0.33px; }
.filter svg { width: 8px; height: 8px; }
.tree { flex: 1; background: #fff; letter-spacing: -0.37px; }
.row { height: 18px; display: flex; align-items: center; width: max-content; }
.row span { margin-left: 4px; height: 18px; line-height: 20px; }
.row.file { letter-spacing: -0.5px; }
.twist { width: 10px; height: 10px; margin-right: 5px; }
.l0 { padding-left: 5px; }
.l1 { padding-left: 21px; }
.l2 { padding-left: 37px; }
.l3 { margin-left: 65px; padding: 0 3px; }
.rep { color: #24476c; letter-spacing: -0.34px; }
.selected { background: #d9d9d9; border-radius: 2px; }

.editor { width: 424px; margin-left: 4px; border: 1px solid #dadada; display: flex; flex-direction: column; }
.editor .tabs { height: 24px; background: #f0f0f0; }
.tab.plain { width: 85px; letter-spacing: -0.2px; }
.tab.current { width: 170px; background: #fff; }
.editorbody { flex: 1; display: flex; }
.diagram { width: 409px; display: flex; flex-direction: column; }
.edit { height: 23px; padding: 1px 0 0 4px; background: linear-gradient(#f2f2f2, #fff); border-bottom: 1px solid #aaa; grid-template-columns: 22px 16px 22px 16px 22px 15px 23px 14px 10px 23px 21px 11px 21px 15px 10px 24px 20px 15px 9px 24px 21px 23px 8px; overflow: hidden; }
.edit .mid { color: #777; }
.lbl { display: flex; flex-direction: column; align-items: center; font: bold 7px/7px "Liberation Sans", sans-serif; letter-spacing: -.6px; color: #888; width: 18px; }
.lbl i { width: 8px; height: 8px; border-radius: 50%; background: #999; }
.lbl.blue { color: #17306b; align-items: flex-start; width: 8px; overflow: hidden; }
.lbl.blue svg { width: 8px; height: 8px; }
.canvas { flex: 1; display: flex; }
.page { flex: 1; background: #fff; position: relative; }
.vscroll { width: 16px; background: #f0f0f0; padding: 6px 0 0 3px; }
.vscroll svg { width: 9px; height: 7px; }
.hscroll { height: 16px; background: #f0f0f0; padding: 4px 0 0 5px; }
.hscroll svg { width: 7px; height: 9px; }
.palette { flex: 1; background: #f0f0f0; border-left: 1px solid #aaa; }
.palbtn { height: 25px; background: #fff; border-bottom: 1px solid #aaa; padding: 6px 0 0 3px; }
.palbtn svg { width: 6px; height: 12px; }
.node { position: absolute; left: 94px; top: 74px; width: 85px; height: 41px; border: 2px solid #000; background: #eee; }
.nodehead { display: flex; align-items: center; height: 25px; background: linear-gradient(#fff, #ededed); border-bottom: 1px solid #000; letter-spacing: -0.38px; }
.nodehead span { margin-left: 3px; line-height: 20px; }
.nodebody { height: 12px; background: linear-gradient(90deg, #e8e8e8, #c9c9c9); }
.handles { position: absolute; left: -3px; top: -3px; width: 86px; height: 43px; overflow: visible; }
.message { height: 22px; padding-left: 3px; line-height: 23px; letter-spacing: -0.35px; }
.status { display: flex; align-items: center; height: 28px; padding: 2px 0 0 2px; gap: 3px; letter-spacing: -0.49px; }

.menu { position: absolute; background: #f9f9f9; border: 1px solid #dfdfdf; border-radius: 5px; }
.context { left: 403px; top: 216px; width: 330px; height: 209px; padding: 2px 5px; box-shadow: 2px 5px 9px rgba(0,0,0,.22); }
.submenu { left: 726px; top: 216px; width: 284px; height: 241px; padding: 2px 3px 2px 5px; border-color: #d8dce4; }
.item { height: 22px; display: flex; align-items: center; padding-left: 4px; border-radius: 4px; }
.item > svg, .item > i { width: 16px; height: 16px; }
.item span, .item kbd { height: 18px; line-height: 19px; }
.item span { margin-left: 12px; }
.item .snug { letter-spacing: -0.35px; }
.item .dense { letter-spacing: -0.29px; }
.item.hover { background: #efefef; }
.item kbd { font: inherit; line-height: 19px; margin-left: auto; margin-right: 21px; letter-spacing: 0; }
.submenu .item kbd { margin-right: 22px; letter-spacing: .1px; }
.disabled { color: #a0a0a0; }
.disabled svg { color: #bdbdbd; }
.sub { margin-left: auto; margin-right: 13px; width: 6px; height: 6px; border: solid #333; border-width: 1px 1px 0 0; transform: rotate(45deg); }
.menu hr { height: 9px; margin: 0 5px 0 3px; border: 0; background: linear-gradient(#d7d7d7, #d7d7d7) 0 4px / 100% 1px no-repeat; }
.menu hr.tight { height: 6px; background-position: 0 1px; }
```
